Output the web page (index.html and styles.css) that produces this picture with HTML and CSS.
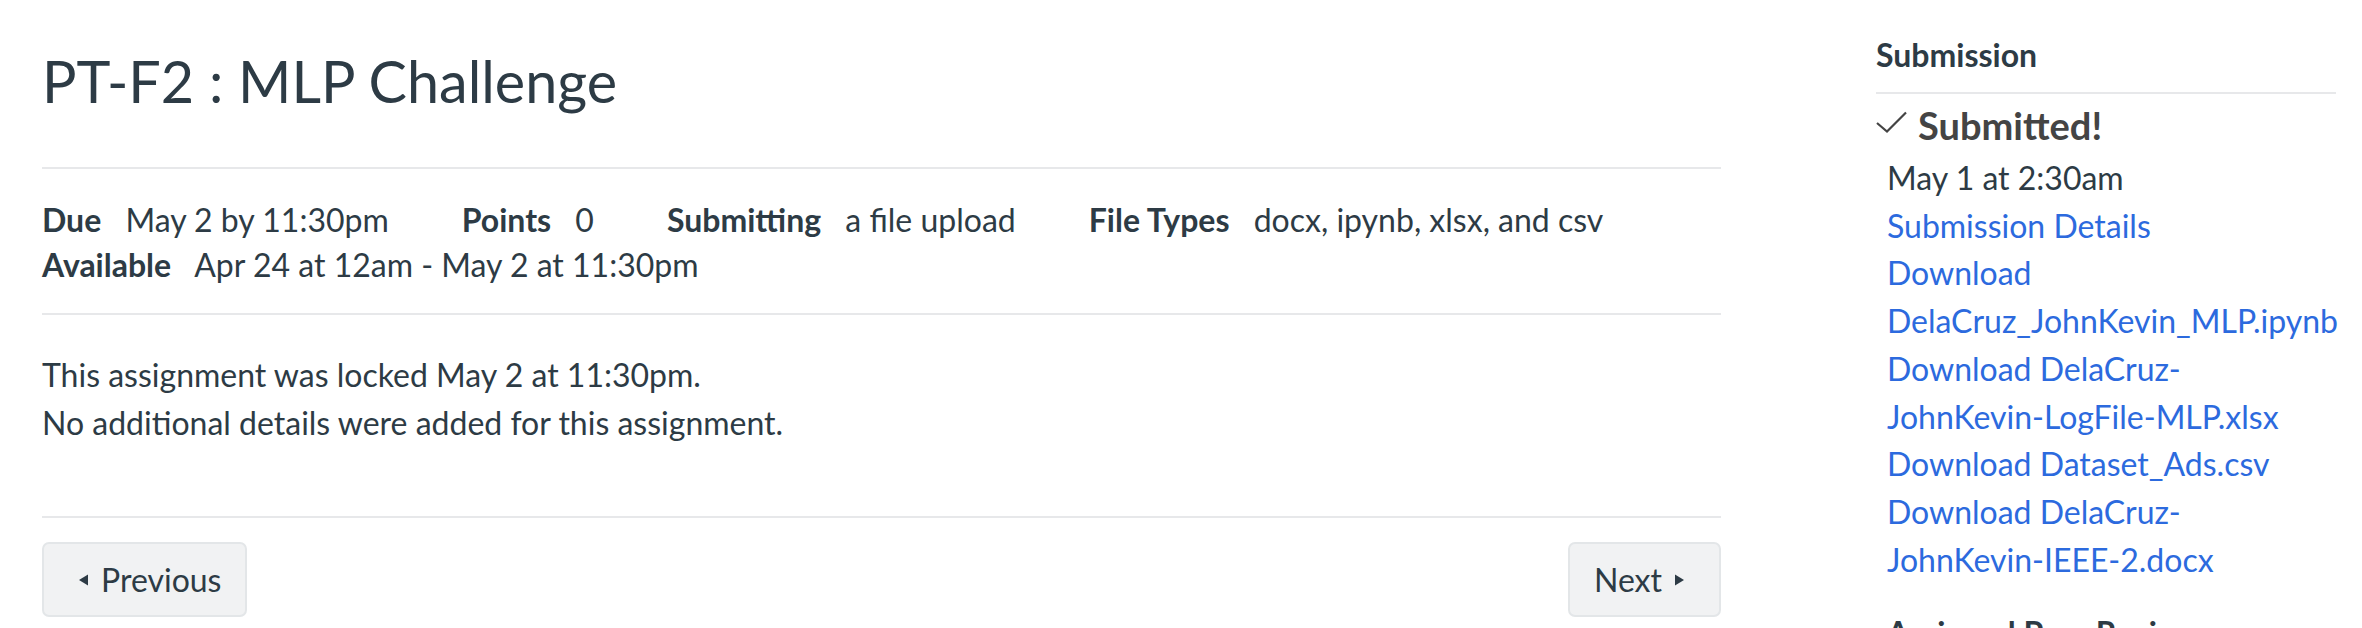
FILE: index.html
```html
<!DOCTYPE html>
<html lang="en">
<head>
<meta charset="utf-8">
<title>PT-F2 : MLP Challenge</title>
<link rel="stylesheet" href="styles.css">
</head>
<body>
<div class="page">
  <main class="main">
    <h1 class="title">PT-F2 : MLP Challenge</h1>
    <hr class="rule">
    <ul class="overview">
      <li><span class="label">Due</span> <span class="value">May 2 by 11:30pm</span></li>
      <li><span class="label">Points</span> <span class="value">0</span></li>
      <li><span class="label">Submitting</span> <span class="value">a file upload</span></li>
      <li><span class="label">File Types</span> <span class="value">docx, ipynb, xlsx, and csv</span></li>
      <li><span class="label">Available</span> <span class="value">Apr 24 at 12am - May 2 at 11:30pm</span></li>
    </ul>
    <hr class="rule rule-2">
    <div class="description">
      <p>This assignment was locked May 2 at 11:30pm.</p>
      <p>No additional details were added for this assignment.</p>
    </div>
    <hr class="rule rule-3">
    <nav class="pager">
      <a class="btn btn-prev" href="#"><svg class="tri" width="20" height="20" viewBox="0 0 20 20"><polygon points="20,4.5 20,15.5 11,10" fill="#2d3b45"/></svg>Previous</a>
      <a class="btn btn-next" href="#">Next<svg class="tri" width="20" height="20" viewBox="0 0 20 20"><polygon points="0,4.5 0,15.5 9,10" fill="#2d3b45"/></svg></a>
    </nav>
  </main>
  <aside class="sidebar">
    <h2 class="side-head">Submission</h2>
    <div class="status">
      <svg class="check" width="31" height="22" viewBox="0 0 31 22"><polyline points="1,12 11,20.5 30,1.5" fill="none" stroke="#444" stroke-width="2.2"/></svg>
      <span>Submitted!</span>
    </div>
    <div class="details">
      <div class="date">May 1 at 2:30am</div>
      <a href="#">Submission Details</a>
      <a href="#">Download DelaCruz_JohnKevin_MLP.ipynb</a>
      <a href="#">Download DelaCruz-JohnKevin-LogFile-MLP.xlsx</a>
      <a href="#">Download Dataset_Ads.csv</a>
      <a href="#">Download DelaCruz-JohnKevin-IEEE-2.docx</a>
    </div>
    <h3 class="side-sub">Assigned Peer Reviews</h3>
  </aside>
</div>
</body>
</html>
```
FILE: styles.css
```css
* { box-sizing: border-box; }
html, body { margin: 0; padding: 0; background: #fff; }
body {
  font-family: Lato, "Open Sans", "Liberation Sans", sans-serif;
  font-size: 32px;
  color: #2d3b45;
  overflow: hidden;
}
.page {
  display: flex;
  align-items: flex-start;
  padding-left: 42px;
}
.main {
  width: 1679px;
  flex: none;
  padding-top: 47px;
}
.title {
  margin: 0 0 53px;
  font-size: 57.5px;
  font-weight: 400;
  line-height: 67px;
  color: #2d3b45;
}
.rule {
  margin: 0;
  border: 0;
  border-top: 2px solid #e7e8ea;
  height: 0;
}
.overview {
  list-style: none;
  margin: 28px 0 26px;
  padding: 0;
  display: flex;
  flex-wrap: wrap;
  column-gap: 73px;
  line-height: 45px;
}
.label { font-weight: 700; margin-right: 16px; }
.description { margin: 36px 0 69px; line-height: 48px; }
.description p { margin: 0; }
.pager {
  margin-top: 24px;
  display: flex;
  justify-content: space-between;
}
.btn {
  display: flex;
  align-items: center;
  height: 75px;
  padding: 0 24px;
  border: 2px solid #e3e6e8;
  border-radius: 7px;
  background: #f1f2f3;
  color: #2d3b45;
  text-decoration: none;
  font-size: 32px;
}
.btn-prev .tri { margin-right: 13px; }
.btn-next .tri { margin-left: 13px; }
.tri { display: block; }
.sidebar {
  width: 460px;
  flex: none;
  margin-left: 155px;
  padding-top: 31px;
}
.side-head {
  margin: 0;
  font-size: 32px;
  font-weight: 700;
  line-height: 48px;
  padding-bottom: 13px;
  border-bottom: 2px solid #e7e8ea;
}
.status {
  display: flex;
  align-items: center;
  margin-top: 8px;
  font-size: 38px;
  font-weight: 700;
  line-height: 46px;
  color: #444;
}
.check { display: block; margin-right: 11px; margin-top: -6px; }
.details {
  margin-top: 6px;
  padding-left: 11px;
  width: 440px;
  line-height: 47.7px;
}
.details a, .details .date { display: block; }
.details a { color: #2c6ade; text-decoration: none; }
.side-sub {
  margin: 26px 0 0 11px;
  font-size: 32px;
  font-weight: 700;
  line-height: 48px;
}
```
